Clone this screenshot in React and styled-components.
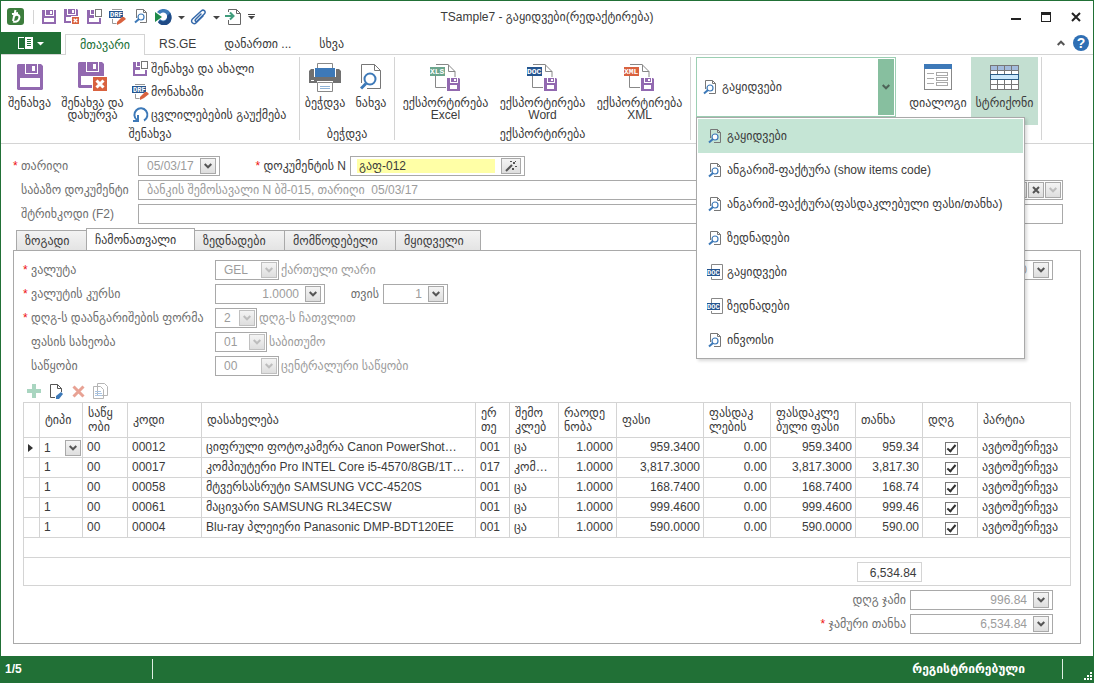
import React from "react";
import styled, { createGlobalStyle, css } from "styled-components";

const colors = {
  green: "#217036",
  mint: "#c5e5d5",
  mintDark: "#87bf9f",
  line: "#d4d4d4",
  border: "#a9a9a9",
  text: "#3b3b3b",
  label: "#6f6f6f",
  muted: "#9c9c9c",
  purple: "#9269b0",
  red: "#d9623f",
  blue: "#3d79b8",
  navy: "#25558f",
};

const GlobalStyle = createGlobalStyle`
  *,
  *::before {
    box-sizing: border-box;
  }

  body {
    margin: 0;
    background: #fff;
  }

  body,
  button,
  input,
  select {
    color: ${colors.text};
    font-family: "Liberation Sans", "DejaVu Sans", sans-serif;
    font-size: 12px;
  }

  button {
    background: none;
    border: 0;
    padding: 0;
  }

  svg {
    display: block;
    flex: none;
  }
`;

/* ---------- icons ---------- */

const Tag = styled.text`
  fill: #fff;
  font-family: "Liberation Mono", monospace;
  font-size: ${({ $large }) => ($large ? 8 : 7)}px;
  font-weight: 700;
`;

const Floppy = () => (
  <svg width="14" height="14" viewBox="0 0 14 14" shapeRendering="crispEdges">
    <path fill={colors.purple} d="M0 0h13l1 1v13H0z" />
    <path fill="#fff" d="M3 0h1v5h7V0h1v6H3zM8 1h2v3H8zM2 8h10v4H2z" />
  </svg>
);

const FloppyLarge = () => (
  <svg width="26" height="26" viewBox="0 0 26 26">
    <path fill={colors.purple} d="M1 0h23l2 2v23l-1 1H1l-1-1V1z" />
    <path fill="#fff" d="M8 0h1v9h11V0h1v10H8zM15 2h3v5h-3zM3 14h20v9H3z" />
  </svg>
);

const FloppyClose = ({ large }) =>
  large ? (
    <svg width="30" height="30" viewBox="0 0 30 30">
      <path fill={colors.purple} d="M1 0h23l2 2v23l-1 1H1l-1-1V1z" />
      <path fill="#fff" d="M8 0h1v9h11V0h1v10H8zM15 2h3v5h-3zM3 14h20v9H3z" />
      <path fill="#fff" d="M14 14h16v16H14z" />
      <path fill={colors.red} d="M15 15h14v14H15z" />
      <path stroke="#fff" strokeWidth="3" d="M18.500 18.500l7 7M25.500 18.500l-7 7" />
    </svg>
  ) : (
    <svg width="16" height="16" viewBox="0 0 16 16">
      <path fill={colors.purple} d="M0 0h13l1 1v13H0z" />
      <path fill="#fff" d="M3 0h1v5h7V0h1v6H3zM8 1h2v3H8zM2 8h10v4H2zM7 7h8v9H7z" />
      <path fill={colors.red} d="M8 8h7v7H8z" />
      <path stroke="#fff" strokeWidth="1.300" d="M9.700 9.700l3.600 3.600M13.300 9.700l-3.600 3.600" />
    </svg>
  );

const FloppyNew = () => (
  <svg width="15" height="15" viewBox="0 0 15 15" shapeRendering="crispEdges">
    <path fill={colors.purple} d="M0 1h7v8h7v6H0z" />
    <path fill="#fff" d="M3 1h1v4h3v1H3zM2 9h10v4H2z" />
    <path fill="#fff" stroke="#777" d="M8.500.5h6v7h-6z" />
  </svg>
);

const Draft = () => (
  <svg width="17" height="16" viewBox="0 0 17 16">
    <path fill="none" stroke="#999" d="M3 .5h10M3.500 10v4.500h5" />
    <path fill={colors.navy} d="M0 2h14v7H0z" />
    <Tag x="1" y="8">DRF</Tag>
    <path fill="#fff" d="M7 16l2-5 6-4 2 2v2l-5 5z" />
    <path fill={colors.red} d="M8 13l5-5h2l2 2-5 4-4 2z" />
  </svg>
);

const Preview = () => (
  <svg width="14" height="15" viewBox="0 0 14 15">
    <path fill="none" stroke="#777" d="M2.500 9V.5h7l3 3v10H6M9.500.5v3h3" />
    <circle cx="7" cy="8" r="3" fill="#fff" stroke={colors.blue} strokeWidth="1.200" />
    <path stroke={colors.blue} strokeWidth="2" d="M5 10L1 13.500" />
  </svg>
);

const PreviewLarge = () => (
  <svg width="22" height="26" viewBox="0 0 22 26">
    <path fill="none" stroke="#777" d="M1.500 19V.5h13l6 6v18H7M14.500.5v6h6" />
    <circle cx="10" cy="15" r="5.500" fill="#fff" stroke={colors.blue} strokeWidth="2" />
    <path stroke={colors.blue} strokeWidth="3" d="M6 19.500L1 24.500" />
  </svg>
);

const Logo = () => (
  <svg width="17" height="17" viewBox="0 0 17 17">
    <rect width="17" height="17" rx="3" fill="#3c7d3d" />
    <path
      fill="none"
      stroke="#fff"
      strokeWidth="2"
      d="M8.500 2L6 13M6.500 9C9 5 14 7 12 11c-1 3-4 3-6 2.500M5 6l6-1"
    />
  </svg>
);

const Globe = () => (
  <svg width="17" height="16" viewBox="0 0 17 16">
    <path fill={colors.blue} d="M2 3A8 7.500 0 1 1 3 13l2-3a4 4 0 1 0 0-5z" />
    <path fill="#1f4a85" d="M15 4a7.500 7.500 0 0 1-12 9.500l2-2.500c3 3 8 1 7-4z" />
    <path fill="#1d8a49" d="M0 3l7 5-7 5z" />
  </svg>
);

const Clip = () => (
  <svg width="17" height="16" viewBox="0 0 17 16">
    <path
      fill="none"
      stroke="#3569aa"
      strokeWidth="1.500"
      strokeLinecap="round"
      d="M11 5L5.500 10.500c-1 1.200.5 2.700 1.700 1.600l7.300-7.300c2-2-1-4.900-3-3L2.500 10c-2.700 2.700 1 6.300 3.700 3.700L13 7"
    />
  </svg>
);

const ExportDoc = () => (
  <svg width="17" height="16" viewBox="0 0 17 16">
    <path fill="none" stroke="#666" d="M3.500 3V.5h8l4 4v11h-12V11M11.500.5v4h4" />
    <path fill="none" stroke="#3f9d7c" strokeWidth="2" d="M0 7h8M5 3.500L8.500 7 5 10.500" />
  </svg>
);

const Undo = () => (
  <svg width="16" height="17" viewBox="0 0 16 17">
    <path
      fill="none"
      stroke={colors.blue}
      strokeWidth="2"
      d="M4 14A6.500 6.500 0 1 1 11 14.500M0 15h5V9"
    />
  </svg>
);

const Printer = () => (
  <svg width="32" height="29" viewBox="0 0 32 29">
    <path fill="#fff" stroke="#888" d="M8.500.5h15v7h-15z" />
    <path fill="#707070" d="M2 6h3v8h22V6h3l2 2v12H0V8z" />
    <path fill={colors.blue} d="M6 5h20v9H6z" />
    <path fill="#fff" d="M2 17h3v1H2zM8 18h16v3H8z" />
    <path fill="#fff" stroke="#888" d="M8.500 19.500h15v9h-15z" />
    <path stroke="#8fb4d8" d="M11 23.500h10M11 25.500h10" />
  </svg>
);

const ExportFile = ({ type, color }) => (
  <svg width="31" height="29" viewBox="0 0 31 29">
    <path fill="none" stroke="#888" d="M5.500 13v11.500H16M6 1.500h12l7 7V14M18.500 1.500v7h6.500" />
    <path fill={color} d="M0 4h15v9H0z" />
    <Tag $large x="0" y="11">{type}</Tag>
    <path fill={colors.purple} d="M17 15h12l1 1v12H17z" />
    <path fill="#fff" d="M20 15h1v4h6v-4h1v5h-8zM24 16h2v2h-2zM20 22h7v4h-7z" />
  </svg>
);

const DocFile = () => (
  <svg width="16" height="16" viewBox="0 0 16 16">
    <path fill="none" stroke="#888" d="M4.500 5V.5h11v15h-11V13" />
    <path fill={colors.navy} d="M0 5h13v7H0z" />
    <Tag x="0" y="11">DOC</Tag>
  </svg>
);

const DialogIcon = () => (
  <svg width="28" height="26" viewBox="0 0 28 26" shapeRendering="crispEdges">
    <path fill="#fff" stroke="#888" d="M.5.5h27v25H.5z" />
    <path fill={colors.blue} d="M0 0h28v5H0z" />
    <path
      fill="none"
      stroke="#aaa"
      d="M3 9.500h7M3 14.500h7M3 19.500h7M12.500 8.500h11v3h-11zM12.500 13.500h11v3h-11zM12.500 18.500h11v3h-11z"
    />
  </svg>
);

const RowsIcon = () => (
  <svg width="29" height="25" viewBox="0 0 29 25" shapeRendering="crispEdges">
    <path fill="#fff" d="M0 0h29v25H0z" />
    <path fill="#a3bbdc" d="M0 0h29v5H0z" />
    <path fill="none" stroke="#777" d="M.5.5h28v24H.5zM7.500 0v25M14.500 0v25M21.500 0v25M0 5.500h29M0 19.500h29" />
    <path fill="#cbe8fb" stroke="#2b5c86" d="M.5 9.500h28v5H.5z" />
  </svg>
);

const Chevron = ({ up, color = "#555" }) => (
  <svg width="8" height="6" viewBox="0 0 8 6">
    <path fill="none" stroke={color} strokeWidth="2" d={up ? "M.7 5L4 1.700 7.300 5" : "M.7 1L4 4.300 7.300 1"} />
  </svg>
);

const Caret = ({ line, color = "#444" }) => (
  <svg width="7" height="6" viewBox="0 0 7 6">
    {line && <path fill={color} d="M0 0h7v1H0z" />}
    <path fill={color} d="M0 2h7L3.500 5.500z" />
  </svg>
);

const Wand = () => (
  <svg width="12" height="11" viewBox="0 0 12 11">
    <path stroke="#555" strokeWidth="2" d="M1 10l6-6" />
    <path fill="#555" d="M5 0h2v1H5zM8 1h2v2H8zM10 5h2v1h-2zM7 7h2v2H7zM10 0h1v1h-1z" />
  </svg>
);

/* ---------- window ---------- */

const Window = styled.div`
  border: 1px solid ${colors.green};
  display: flex;
  flex-direction: column;
  min-height: 100vh;
`;

const TitleBar = styled.header`
  align-items: center;
  display: grid;
  grid-template-columns: 1fr auto 1fr;
  height: 31px;
`;

const Title = styled.h1`
  font-size: 12px;
  font-weight: 400;
  margin: 0;
`;

const QuickAccess = styled.div`
  align-items: center;
  display: flex;
  padding-left: 6px;
`;

const QuickDivider = styled.span`
  background: ${colors.line};
  height: 14px;
  margin: 0 3px 0 9px;
  width: 1px;
`;

const QuickButton = styled.button`
  display: grid;
  height: 22px;
  place-items: center;
  width: ${({ $narrow }) => ($narrow ? 12 : 23)}px;
`;

const WindowButtons = styled.div`
  display: flex;
  justify-content: flex-end;
  padding-right: 2px;
`;

const WindowButton = styled.button`
  display: grid;
  height: 28px;
  place-items: center;
  width: 30px;
`;

/* ---------- ribbon ---------- */

const TabBar = styled.nav`
  align-items: flex-end;
  border-bottom: 1px solid ${colors.line};
  display: flex;
  height: 23px;
`;

const FileButton = styled.button`
  align-items: center;
  background: ${colors.green};
  display: flex;
  gap: 4px;
  height: 22px;
  justify-content: center;
  margin-right: 4px;
  width: 60px;
`;

const RibbonTab = styled.button`
  height: 20px;
  padding: 0 14px;

  ${({ $active }) =>
    $active &&
    css`
      background: #fff;
      border: 1px solid ${colors.line};
      border-bottom: 0;
      color: ${colors.green};
      height: 21px;
      margin-bottom: -1px;
    `}
`;

const TabTools = styled.div`
  align-items: center;
  display: flex;
  gap: 4px;
  height: 22px;
  margin-left: auto;
  padding-right: 4px;
`;

const Help = styled.button`
  background: #2f6fb4;
  border-radius: 50%;
  color: #fff;
  font-size: 14px;
  font-weight: 700;
  height: 16px;
  line-height: 16px;
  width: 16px;
`;

const ToolButton = styled.button`
  display: grid;
  height: 16px;
  place-items: center;
  width: 16px;
`;

const Ribbon = styled.section`
  border-bottom: 1px solid ${colors.line};
  display: flex;
  height: 89px;
  padding: 2px 0 3px;
`;

const Group = styled.div`
  border-right: 1px solid ${colors.line};
  display: flex;
  flex: none;
  flex-direction: column;
  justify-content: space-between;
  width: ${({ $width }) => $width}px;
`;

const GroupBody = styled.div`
  display: flex;
  justify-content: ${({ $start }) => ($start ? "flex-start" : "center")};
`;

const GroupTitle = styled.div`
  line-height: 12px;
  text-align: center;
`;

const BigButton = styled.button`
  align-items: center;
  background: ${({ $pressed }) => ($pressed ? "#c3dfd1" : "none")};
  display: flex;
  flex-direction: column;
  height: 68px;
  line-height: 12px;
  white-space: nowrap;
  width: ${({ $width }) => $width}px;
`;

const BigIcon = styled.span`
  display: grid;
  height: 40px;
  place-items: center;
`;

const SmallColumn = styled.div`
  display: flex;
  flex-direction: column;
  padding-left: 5px;
`;

const SmallButton = styled.button`
  align-items: center;
  display: flex;
  gap: 2px;
  height: 23px;
  white-space: nowrap;
`;

const SmallIcon = styled.span`
  display: grid;
  place-items: center;
  width: 17px;
`;

const Gallery = styled.div`
  align-self: flex-start;
  border: 1px solid #9ccfb3;
  display: flex;
  flex: none;
  height: 60px;
  margin: 0 6px 0 5px;
  padding: 1px;
  position: relative;
  width: 200px;
`;

const GalleryItem = styled.button`
  align-items: center;
  display: flex;
  flex: 1;
  gap: 5px;
  padding-left: 5px;
`;

const GalleryArrow = styled.button`
  background: ${colors.mintDark};
  display: grid;
  place-items: center;
  width: 16px;
`;

const Menu = styled.ul`
  background: #fff;
  border: 1px solid ${colors.border};
  box-shadow: 2px 2px 3px rgba(0, 0, 0, 0.15);
  left: -1px;
  list-style: none;
  margin: 0;
  padding: 1px;
  position: absolute;
  top: 59px;
  width: 329px;
  z-index: 1;
`;

const MenuItem = styled.button`
  align-items: center;
  background: ${({ $active }) => ($active ? colors.mint : "none")};
  display: flex;
  gap: 4px;
  height: 34px;
  padding-left: 8px;
  text-align: left;
  white-space: nowrap;
  width: 100%;
`;

const MenuIcon = styled.span`
  display: grid;
  place-items: center;
  width: 17px;
`;

/* ---------- form ---------- */

const Form = styled.main`
  display: flex;
  flex: 1;
  flex-direction: column;
  padding: 12px 12px;
`;

const Row = styled.div`
  align-items: center;
  display: flex;
  height: 24px;
  padding-bottom: 4px;
`;

const Head = styled.div`
  padding-right: 18px;
`;

const Label = styled.label`
  color: ${({ $strong }) => ($strong ? colors.text : colors.label)};
  flex: none;
  line-height: 14px;
  padding-right: ${({ $right }) => ($right ? 4 : 0)}px;
  text-align: ${({ $right }) => ($right ? "right" : "left")};
  white-space: nowrap;
  width: ${({ $width }) => ($width ? `${$width}px` : "auto")};

  &::before {
    color: #e11;
    content: "${({ $required }) => ($required ? "*" : "")}";
    display: inline-block;
    text-align: left;
    width: 8px;
  }
`;

const Box = styled.div`
  border: 1px solid ${colors.border};
  display: grid;
  flex: ${({ $width }) => ($width ? "none" : 1)};
  gap: 1px;
  grid-template-columns: minmax(0, 1fr) auto auto auto;
  height: 20px;
  padding: 1px;
  width: ${({ $width }) => ($width ? `${$width}px` : "auto")};
`;

const TextInput = styled.input`
  background: ${({ $filled }) => ($filled ? "#ffffa6" : "transparent")};
  border: 0;
  color: ${({ $filled }) => ($filled ? colors.text : colors.muted)};
  height: ${({ $filled }) => ($filled ? 14 : 16)}px;
  margin: ${({ $filled }) => ($filled ? "1px 5px" : 0)};
  min-width: 0;
  outline: 0;
  padding: ${({ $filled }) => ($filled ? "0 2px" : "0 5px 0 7px")};
  text-align: ${({ $right }) => ($right ? "right" : "left")};
`;

const FieldButton = styled.button`
  background: linear-gradient(#f4f4f4, #dedede);
  border: 1px solid ${colors.border};
  display: grid;
  height: 16px;
  place-items: center;
  width: ${({ $wide }) => ($wide ? 20 : 16)}px;
`;

const Select = styled.select`
  appearance: none;
  background: transparent;
  border: 0;
  color: ${({ $dark }) => ($dark ? colors.text : colors.muted)};
  grid-column: 1 / -1;
  grid-row: 1;
  height: 16px;
  opacity: 1;
  padding: 0 ${({ $dark }) => ($dark ? 0 : 7)}px;
`;

const SelectArrow = styled.span`
  background: linear-gradient(#f4f4f4, #dedede);
  border: 1px solid ${({ $soft }) => ($soft ? "#c0c0c0" : colors.border)};
  display: grid;
  grid-column: 4;
  grid-row: 1;
  height: 16px;
  place-items: center;
  pointer-events: none;
  width: 16px;
`;

const Hint = styled.span`
  color: ${colors.muted};
  padding-left: 2px;
`;

const Tabs = styled.div`
  align-items: flex-end;
  display: flex;
  height: 23px;
  margin: 0 4px -1px;
`;

const Tab = styled.button`
  background: linear-gradient(#f3f3f3, #e4e4e4);
  border: 1px solid ${colors.border};
  height: 21px;
  margin-left: -1px;
  padding-left: 8px;
  text-align: left;
  width: ${({ $width }) => $width}px;

  ${({ $active }) =>
    $active &&
    css`
      background: #fff;
      border-bottom-color: #fff;
      height: 23px;
    `}
`;

const Panel = styled.section`
  border: 1px solid ${colors.border};
  flex: 1;
  padding: 9px 9px 4px;
`;

const Push = styled.div`
  display: flex;
  margin-left: auto;
  padding-right: 18px;
`;

const RowTools = styled.div`
  align-items: center;
  display: flex;
  gap: 6px;
  height: 22px;
  padding-left: 3px;
`;

const Grid = styled.table`
  border-collapse: collapse;
  table-layout: fixed;
  width: 100%;
`;

const Th = styled.th`
  border: 1px solid ${colors.line};
  font-weight: 400;
  height: 35px;
  line-height: 14px;
  padding: 0 5px;
  text-align: left;
  white-space: nowrap;
  width: ${({ $width }) => ($width ? `${$width}px` : "auto")};
`;

const Td = styled.td`
  border: 1px solid ${colors.line};
  height: 20px;
  line-height: 19px;
  overflow: hidden;
  padding: 0 ${({ $align }) => ($align === "right" ? 3 : 4)}px;
  text-align: ${({ $align }) => $align || "left"};
  text-overflow: ellipsis;
  white-space: nowrap;
`;

const CellSelect = styled.div`
  display: grid;
  grid-template-columns: 0 0 1fr 16px;
  margin-right: -3px;
`;

const Check = styled.input`
  appearance: none;
  background: #fff;
  border: 1px solid #777;
  display: inline-grid;
  height: 13px;
  margin: 4px 0 0 2px;
  place-items: center;
  vertical-align: top;
  width: 13px;

  &:checked::before {
    border: solid #333;
    border-width: 0 2px 2px 0;
    content: "";
    height: 9px;
    margin-bottom: 2px;
    transform: rotate(40deg);
    width: 5px;
  }
`;

const FootCell = styled.td`
  border: solid ${colors.line};
  border-width: 1px ${({ $last }) => ($last ? 1 : 0)}px 1px ${({ $first }) => ($first ? 1 : 0)}px;
  height: ${({ $tall }) => ($tall ? 28 : 20)}px;
  padding: 0 1px;
`;

const Sum = styled.output`
  border: 1px solid ${colors.line};
  display: block;
  height: 20px;
  line-height: 20px;
  padding-right: 4px;
  text-align: right;
`;

const Totals = styled.div`
  align-items: flex-end;
  display: flex;
  flex-direction: column;
  padding: 4px 18px 0 0;
`;

const StatusBar = styled.footer`
  align-items: center;
  background: ${colors.green};
  color: #fff;
  display: flex;
  font-weight: 700;
  height: 26px;
`;

const StatusCell = styled.div`
  border-right: 1px solid #dfeee3;
  flex: ${({ $grow }) => ($grow ? 1 : "none")};
  height: 20px;
  line-height: 20px;
  padding: 0 37px 0 4px;
  text-align: ${({ $grow }) => ($grow ? "right" : "left")};
  width: ${({ $grow }) => ($grow ? "auto" : "152px")};
`;

const Grip = styled.div`
  align-self: flex-end;
  display: flex;
  justify-content: flex-end;
  padding: 0 1px 2px;
  width: 30px;
`;

const menuItems = [
  { text: "გაყიდვები", icon: <Preview />, active: true },
  { text: "ანგარიშ-ფაქტურა (show items code)", icon: <Preview /> },
  { text: "ანგარიშ-ფაქტურა(ფასდაკლებული ფასი/თანხა)", icon: <Preview /> },
  { text: "ზედნადები", icon: <Preview /> },
  { text: "გაყიდვები", icon: <DocFile /> },
  { text: "ზედნადები", icon: <DocFile /> },
  { text: "ინვოისი", icon: <Preview /> },
];

const tabs = [
  { text: "ზოგადი", width: 71 },
  { text: "ჩამონათვალი", width: 109, active: true },
  { text: "ზედნადები", width: 91 },
  { text: "მომწოდებელი", width: 112 },
  { text: "მყიდველი", width: 86 },
];

const columns = [
  { lines: [""], width: 16 },
  { lines: ["ტიპი"], width: 43 },
  { lines: ["საწყ", "ობი"], width: 45 },
  { lines: ["კოდი"], width: 74 },
  { lines: ["დასახელება"] },
  { lines: ["ერ", "თე"], width: 34 },
  { lines: ["შემო", "კლებ"], width: 49 },
  { lines: ["რაოდე", "ნობა"], width: 58 },
  { lines: ["ფასი"], width: 87 },
  { lines: ["ფასდაკ", "ლების"], width: 67 },
  { lines: ["ფასდაკლე", "ბული ფასი"], width: 85 },
  { lines: ["თანხა"], width: 67 },
  { lines: ["დღგ"], width: 55 },
  { lines: ["პარტია"], width: 93 },
];

const products = [
  ["00012", "ციფრული ფოტოკამერა Canon PowerShot…", "001", "ცა", "959.3400", "959.34"],
  ["00017", "კომპიუტერი Pro INTEL Core i5-4570/8GB/1T…", "017", "კომ…", "3,817.3000", "3,817.30"],
  ["00058", "მტვერსასრუტი SAMSUNG VCC-4520S", "001", "ცა", "168.7400", "168.74"],
  ["00061", "მაცივარი SAMSUNG RL34ECSW", "001", "ცა", "999.4600", "999.46"],
  ["00004", "Blu-ray პლეიერი Panasonic DMP-BDT120EE", "001", "ცა", "590.0000", "590.00"],
];

const Combo = ({ id, value, width }) => (
  <Box $width={width}>
    <Select id={id} disabled defaultValue={value}>
      <option>{value}</option>
    </Select>
    <SelectArrow $soft>
      <Chevron color="#bdbdbd" />
    </SelectArrow>
  </Box>
);

const Edit = ({ id, value, width, right = true }) => (
  <Box $width={width}>
    <TextInput id={id} readOnly value={value} $right={right} />
    <FieldButton aria-label="გახსნა">
      <Chevron />
    </FieldButton>
  </Box>
);

const TitleSection = () => (
  <TitleBar>
    <QuickAccess>
      <Logo />
      <QuickDivider />
      <QuickButton><Floppy /></QuickButton>
      <QuickButton><FloppyClose /></QuickButton>
      <QuickButton><FloppyNew /></QuickButton>
      <QuickButton><Draft /></QuickButton>
      <QuickButton><Preview /></QuickButton>
      <QuickButton><Globe /></QuickButton>
      <QuickButton $narrow><Caret /></QuickButton>
      <QuickButton><Clip /></QuickButton>
      <QuickButton $narrow><Caret /></QuickButton>
      <QuickButton><ExportDoc /></QuickButton>
      <QuickButton $narrow><Caret line /></QuickButton>
    </QuickAccess>
    <Title>TSample7 - გაყიდვები(რედაქტირება)</Title>
    <WindowButtons>
      <WindowButton aria-label="Minimize">
        <svg width="10" height="10"><path fill="#222" d="M0 6h10v2H0z" /></svg>
      </WindowButton>
      <WindowButton aria-label="Maximize">
        <svg width="10" height="10"><path fill="#222" d="M0 0h10v10H0zM1 3v6h8V3z" fillRule="evenodd" /></svg>
      </WindowButton>
      <WindowButton aria-label="Close">
        <svg width="10" height="10"><path stroke="#222" strokeWidth="2" d="M1 1l8 8M9 1L1 9" /></svg>
      </WindowButton>
    </WindowButtons>
  </TitleBar>
);

const TabSection = () => (
  <TabBar>
    <FileButton aria-label="ფაილი">
      <svg width="15" height="12" shapeRendering="crispEdges">
        <path fill="#fff" d="M0 0h15v12H0z" />
        <path fill={colors.green} d="M1 1h5v10H1zM6 0h1v12H6zM9 2h4v1H9zM9 4h4v1H9zM9 6h4v1H9zM9 8h4v1H9z" />
      </svg>
      <Caret color="#fff" />
    </FileButton>
    <RibbonTab $active>მთავარი</RibbonTab>
    <RibbonTab>RS.GE</RibbonTab>
    <RibbonTab>დანართი ...</RibbonTab>
    <RibbonTab>სხვა</RibbonTab>
    <TabTools>
      <ToolButton aria-label="Collapse"><Chevron up /></ToolButton>
      <Help>?</Help>
    </TabTools>
  </TabBar>
);

const RibbonSection = () => (
  <Ribbon>
    <Group $width={299}>
      <GroupBody $start>
        <BigButton $width={57}>
          <BigIcon><FloppyLarge /></BigIcon>
          შენახვა
        </BigButton>
        <BigButton $width={69}>
          <BigIcon><FloppyClose large /></BigIcon>
          შენახვა და
          <br />
          დახურვა
        </BigButton>
        <SmallColumn>
          <SmallButton><SmallIcon><FloppyNew /></SmallIcon>შენახვა და ახალი</SmallButton>
          <SmallButton><SmallIcon><Draft /></SmallIcon>მონახაზი</SmallButton>
          <SmallButton><SmallIcon><Undo /></SmallIcon>ცვლილებების გაუქმება</SmallButton>
        </SmallColumn>
      </GroupBody>
      <GroupTitle>შენახვა</GroupTitle>
    </Group>
    <Group $width={95}>
      <GroupBody>
        <BigButton $width={48}>
          <BigIcon><Printer /></BigIcon>
          ბეჭდვა
        </BigButton>
        <BigButton $width={44}>
          <BigIcon><PreviewLarge /></BigIcon>
          ნახვა
        </BigButton>
      </GroupBody>
      <GroupTitle>ბეჭდვა</GroupTitle>
    </Group>
    <Group $width={296}>
      <GroupBody>
        <BigButton $width={97}>
          <BigIcon><ExportFile type="XLS" color="#6ba58d" /></BigIcon>
          ექსპორტირება
          <br />
          Excel
        </BigButton>
        <BigButton $width={97}>
          <BigIcon><ExportFile type="DOC" color={colors.navy} /></BigIcon>
          ექსპორტირება
          <br />
          Word
        </BigButton>
        <BigButton $width={97}>
          <BigIcon><ExportFile type="XML" color={colors.red} /></BigIcon>
          ექსპორტირება
          <br />
          XML
        </BigButton>
      </GroupBody>
      <GroupTitle>ექსპორტირება</GroupTitle>
    </Group>
    <Gallery>
      <GalleryItem><Preview />გაყიდვები</GalleryItem>
      <GalleryArrow aria-label="სია"><Chevron color="#4d6357" /></GalleryArrow>
      <Menu>
        {menuItems.map(({ text, icon, active }, index) => (
          <li key={index}>
            <MenuItem $active={active}>
              <MenuIcon>{icon}</MenuIcon>
              {text}
            </MenuItem>
          </li>
        ))}
      </Menu>
    </Gallery>
    <Group $width={140}>
      <GroupBody>
        <BigButton $width={66}>
          <BigIcon><DialogIcon /></BigIcon>
          დიალოგი
        </BigButton>
        <BigButton $width={67} $pressed>
          <BigIcon><RowsIcon /></BigIcon>
          სტრიქონი
        </BigButton>
      </GroupBody>
    </Group>
  </Ribbon>
);

const ProductTable = () => (
  <Grid>
    <thead>
      <tr>
        {columns.map(({ lines, width }, index) => (
          <Th key={index} $width={width}>
            {lines[0]}
            {lines[1] && <br />}
            {lines[1]}
          </Th>
        ))}
      </tr>
    </thead>
    <tbody>
      {products.map(([code, name, unit, short, price, total], index) => (
        <tr key={code}>
          <Td>
            {index === 0 && <svg width="5" height="8"><path fill="#333" d="M0 0l5 4-5 4z" /></svg>}
          </Td>
          <Td>
            {index === 0 ? (
              <CellSelect>
                <Select aria-label="ტიპი" $dark><option>1</option></Select>
                <SelectArrow><Chevron /></SelectArrow>
              </CellSelect>
            ) : "1"}
          </Td>
          <Td>00</Td>
          <Td>{code}</Td>
          <Td>{name}</Td>
          <Td>{unit}</Td>
          <Td>{short}</Td>
          <Td $align="right">1.0000</Td>
          <Td $align="right">{price}</Td>
          <Td $align="right">0.00</Td>
          <Td $align="right">{price}</Td>
          <Td $align="right">{total}</Td>
          <Td $align="center"><Check type="checkbox" aria-label="დღგ" defaultChecked /></Td>
          <Td>ავტოშერჩევა</Td>
        </tr>
      ))}
    </tbody>
    <tfoot>
      <tr><FootCell colSpan={14} $first $last /></tr>
      <tr>
        <FootCell colSpan={11} $first $tall />
        <FootCell $tall><Sum>6,534.84</Sum></FootCell>
        <FootCell colSpan={2} $last $tall />
      </tr>
    </tfoot>
  </Grid>
);

const App = () => (
  <>
    <GlobalStyle />
    <Window>
      <TitleSection />
      <TabSection />
      <RibbonSection />
      <Form>
        <Head>
          <Row>
            <Label htmlFor="date" $required $width={125}>თარიღი</Label>
            <Edit id="date" value="05/03/17" width={82} right={false} />
            <Label htmlFor="number" $required $strong $right $width={130}>დოკუმენტის N</Label>
            <Box $width={175}>
              <TextInput id="number" defaultValue="გაფ-012" $filled />
              <FieldButton $wide aria-label="გენერაცია"><Wand /></FieldButton>
            </Box>
          </Row>
          <Row>
            <Label htmlFor="base" $width={125}>საბაზო დოკუმენტი</Label>
            <Box>
              <TextInput id="base" readOnly value="ბანკის შემოსავალი N ბშ-015, თარიღი  05/03/17" />
              <FieldButton aria-label="ძებნა">…</FieldButton>
              <FieldButton aria-label="წაშლა">
                <svg width="8" height="8"><path stroke="#555" strokeWidth="2" d="M1 1l6 6M7 1L1 7" /></svg>
              </FieldButton>
              <FieldButton aria-label="გახსნა"><Chevron color="#bdbdbd" /></FieldButton>
            </Box>
          </Row>
          <Row>
            <Label htmlFor="barcode" $width={125}>შტრიხკოდი (F2)</Label>
            <Box><TextInput id="barcode" /></Box>
          </Row>
        </Head>
        <Tabs>
          {tabs.map(({ text, width, active }) => (
            <Tab key={text} $width={width} $active={active}>{text}</Tab>
          ))}
        </Tabs>
        <Panel>
          <Row>
            <Label htmlFor="currency" $required $width={192}>ვალუტა</Label>
            <Combo id="currency" value="GEL" width={64} />
            <Hint>ქართული ლარი</Hint>
            <Push>
              <Edit id="amount" value="0.00" width={143} />
            </Push>
          </Row>
          <Row>
            <Label htmlFor="rate" $required $width={192}>ვალუტის კურსი</Label>
            <Edit id="rate" value="1.0000" width={110} />
            <Label htmlFor="month" $right $width={58}>თვის</Label>
            <Edit id="month" value="1" width={65} />
          </Row>
          <Row>
            <Label htmlFor="vat" $required $width={192}>დღგ-ს დაანგარიშების ფორმა</Label>
            <Combo id="vat" value="2" width={42} />
            <Hint>დღგ-ს ჩათვლით</Hint>
          </Row>
          <Row>
            <Label htmlFor="price" $width={192}>ფასის სახეობა</Label>
            <Combo id="price" value="01" width={52} />
            <Hint>საბითუმო</Hint>
          </Row>
          <Row>
            <Label htmlFor="store" $width={192}>საწყობი</Label>
            <Combo id="store" value="00" width={64} />
            <Hint>ცენტრალური საწყობი</Hint>
          </Row>
          <RowTools>
            <ToolButton aria-label="დამატება">
              <svg width="14" height="14"><path fill="#a9d5c0" d="M5 0h4v5h5v4H9v5H5V9H0V5h5z" /></svg>
            </ToolButton>
            <ToolButton aria-label="შეცვლა">
              <svg width="15" height="15">
                <path fill="none" stroke="#555" d="M6 13.500H1.500V.5h7l4 4V8M8.500.5v4h4" />
                <path fill={colors.blue} d="M7 12l5-4 2 2-4 5H7z" />
              </svg>
            </ToolButton>
            <ToolButton aria-label="წაშლა">
              <svg width="13" height="13"><path stroke="#e8a294" strokeWidth="3" d="M1.500 1.500l10 10M11.500 1.500l-10 10" /></svg>
            </ToolButton>
            <ToolButton aria-label="კოპირება">
              <svg width="15" height="16">
                <path fill="#fff" stroke="#b5b5b5" d="M4.500.5h7l3 3v9h-10zM.5 3.500h7l3 3v9H.5z" />
                <path stroke="#a9c4e2" d="M2 8.500h6M2 10.500h7M2 12.500h7" />
              </svg>
            </ToolButton>
          </RowTools>
          <ProductTable />
          <Totals>
            <Row>
              <Label htmlFor="vatTotal" $right>დღგ ჯამი</Label>
              <Edit id="vatTotal" value="996.84" width={143} />
            </Row>
            <Row>
              <Label htmlFor="total" $right $required>ჯამური თანხა</Label>
              <Edit id="total" value="6,534.84" width={143} />
            </Row>
          </Totals>
        </Panel>
      </Form>
      <StatusBar>
        <StatusCell>1/5</StatusCell>
        <StatusCell $grow>რეგისტრირებული</StatusCell>
        <Grip>
          <svg width="8" height="8" fill="#fff" shapeRendering="crispEdges">
            <path d="M6 0h2v2H6zM3 3h2v2H3zM6 3h2v2H6zM0 6h2v2H0zM3 6h2v2H3zM6 6h2v2H6z" />
          </svg>
        </Grip>
      </StatusBar>
    </Window>
  </>
);

export default App;
